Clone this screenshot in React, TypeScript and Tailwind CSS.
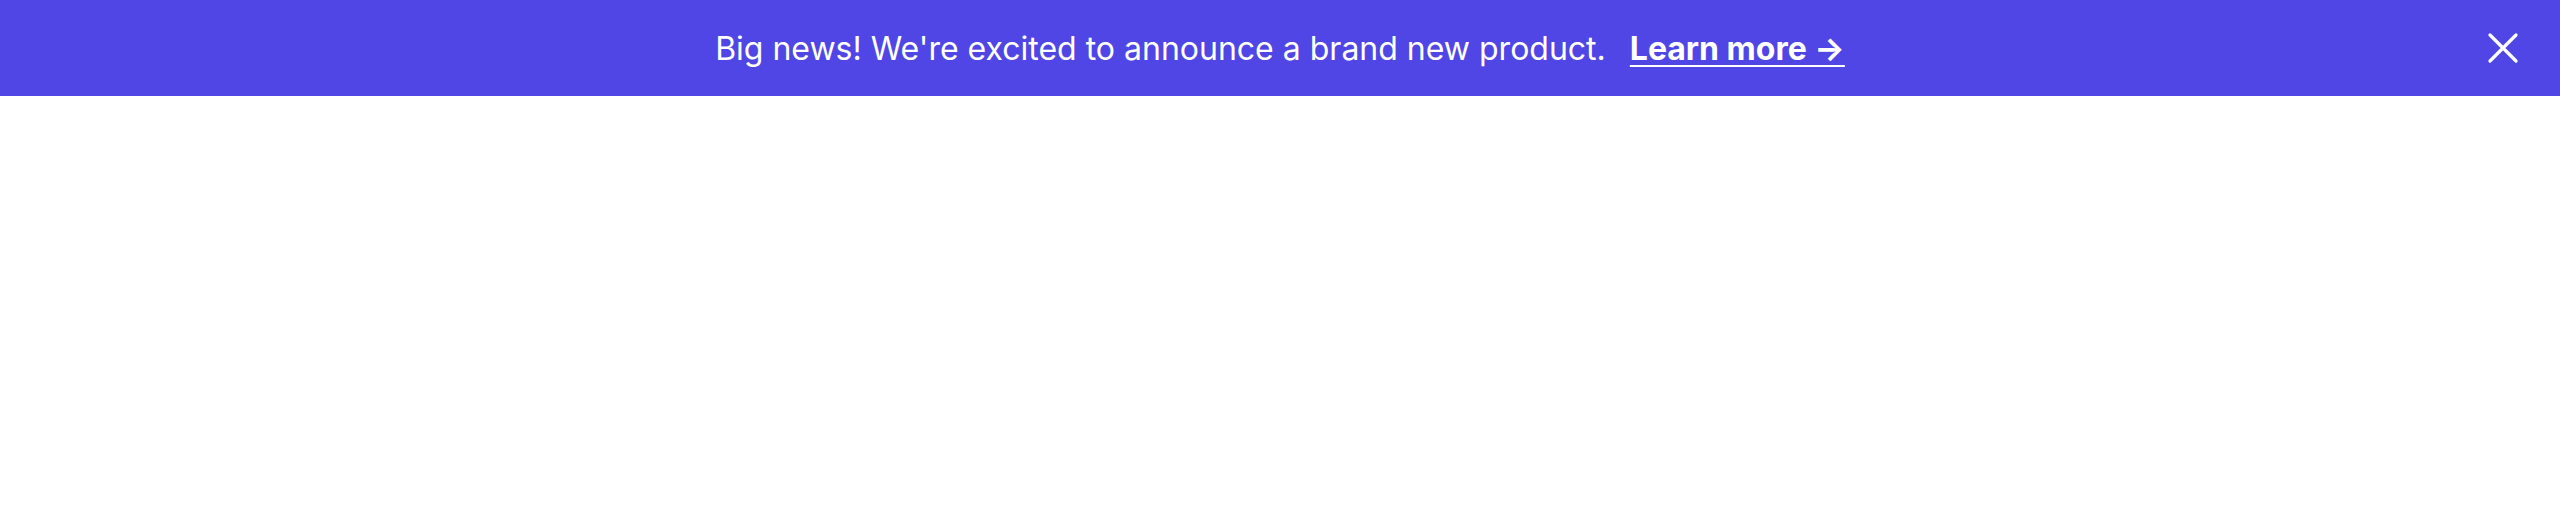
import React from "react";

export default function App() {
  return (
    <div className="min-h-[512px] bg-white font-['Inter',sans-serif]">
      <div className="relative flex h-[96px] items-center justify-center bg-[#4f46e5] px-[28px] text-white">
        <p className="flex items-center pt-[2px] text-[32px] leading-none">
          <span>Big news! We're excited to announce a brand new product.</span>
          <a href="#" className="ml-[24px] font-bold underline decoration-2 underline-offset-[5px]">
            Learn more &rarr;
          </a>
        </p>
        <button className="absolute right-[31px] top-1/2 flex h-[52px] w-[52px] -translate-y-1/2 items-center justify-center">
          <svg viewBox="0 0 24 24" className="h-[52px] w-[52px]" fill="none" stroke="currentColor" strokeWidth={1.5} strokeLinecap="round">
            <path d="M6 18 18 6M6 6l12 12" />
          </svg>
        </button>
      </div>
    </div>
  );
}
